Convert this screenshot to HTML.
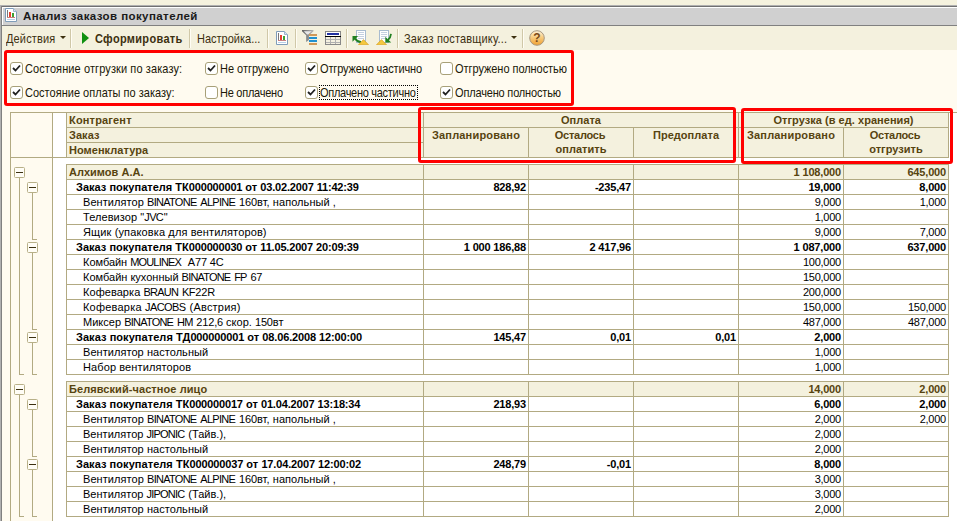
<!DOCTYPE html>
<html lang="ru"><head><meta charset="utf-8"><title>Анализ заказов покупателей</title>
<style>
*{box-sizing:border-box;margin:0;padding:0}
html,body{width:957px;height:521px;overflow:hidden;background:#fffbf0;}
body{position:relative;font-family:"Liberation Sans",sans-serif;font-size:11px;color:#000;}
.a{position:absolute}
.t{position:absolute;white-space:nowrap;line-height:15px;height:15px}
.tb{position:absolute;white-space:nowrap;font-size:11px;line-height:14px;color:#3c3010;transform:scaleY(1.13);transform-origin:0 10.8px}
.b{font-weight:bold}
.h{font-weight:bold;color:#574410}
.r{text-align:right}
.c{text-align:center}
.hl{position:absolute;height:1px;background:#b2aa82}
.vl{position:absolute;width:1px;background:#b2aa82}
.red{position:absolute;border:3px solid #ff0000;border-radius:3px}
.cb{position:absolute;width:13px;height:13px;border:1px solid #a8a078;border-radius:3px;background:#fff}
.sep{position:absolute;top:29px;width:2px;height:19px;border-left:1px solid #d0c8a8;border-right:1px solid #fffdf4}
.box{position:absolute;width:11px;height:11px;border:1px solid #b8b088;border-radius:1.5px;background:#fffdf6}
.box i{position:absolute;left:1px;top:4px;width:7px;height:1px;background:#3c3010}
.u{letter-spacing:calc(-0.72px + var(--d,0px));margin-right:0.72px}
.d{letter-spacing:calc(-0.12px + var(--d,0px))}
.t{letter-spacing:calc(0.08px + var(--d,0px))}
.t.b,.t.h{letter-spacing:calc(0.04px + var(--d,0px))}
.t.b .u,.t.h .u{letter-spacing:calc(-0.2px + var(--d,0px));margin-right:0}
.t.b .d,.t.h .d{letter-spacing:calc(-0.16px + var(--d,0px))}
.tb,#title{letter-spacing:var(--d,0px)}
.t.n{letter-spacing:-0.24px}
.t.b.n,.t.h.n{letter-spacing:-0.17px}
</style></head>
<body>
<div class="a" style="left:0;top:0;width:957px;height:5px;background:#f5f2de"></div>
<div class="a" style="left:0;top:5px;width:957px;height:1px;background:#b0b0b0"></div>
<div class="a" style="left:0;top:5px;width:1px;height:516px;background:#b0b0b0"></div>
<div class="a" style="left:1px;top:6px;width:956px;height:1px;background:#707070"></div>
<div class="a" style="left:1px;top:6px;width:1px;height:515px;background:#808080"></div>
<div class="a" style="left:2px;top:7px;width:955px;height:18px;background:#d0d0d0;border-top:1px solid #fff;border-left:1px solid #fff"></div>
<div class="a" style="left:2px;top:25px;width:955px;height:1px;background:#808080"></div>
<div class="a" style="left:2px;top:26px;width:955px;height:24px;background:#f4f1de"></div>
<svg class="a" style="left:5px;top:8px" width="12" height="14" viewBox="0 0 12 14">
<path d="M0.5 0.5H8.5L11.5 3.5V13.5H0.5Z" fill="#fff" stroke="#7f9db9"/>
<path d="M8.5 0.5V3.5H11.5" fill="#dbe6f2" stroke="#9fb5cc"/>
<rect x="2" y="2" width="1" height="8" fill="#787878"/>
<rect x="2" y="9" width="8" height="1" fill="#c88080"/>
<rect x="4" y="4" width="2" height="5" fill="#e84030"/>
<rect x="7" y="5" width="2" height="4" fill="#40a030"/>
<rect x="2" y="11" width="8" height="1" fill="#b8d0e8"/>
</svg>
<div class="a b" style="left:23px;top:9px;font-size:11.5px;line-height:14px;color:#1a1a1a;white-space:nowrap;--d:0.415px" id="title">Анализ заказов покупателей</div>
<div class="tb" style="left:6px;top:32px;--d:0.138px" id="tb1">Действия</div>
<svg class="a" style="left:60px;top:36px" width="6" height="3"><path d="M0 0H6L3 3Z" fill="#3c3010"/></svg>
<div class="sep" style="left:70px"></div>
<svg class="a" style="left:82px;top:32px" width="7" height="12"><path d="M0 0L7 6L0 12Z" fill="#109010"/></svg>
<div class="tb b" style="left:95px;top:32px;--d:0.317px" id="tb2">Сформировать</div>
<div class="sep" style="left:189px"></div>
<div class="tb" style="left:197px;top:32px;--d:-0.002px" id="tb3">Настройка...</div>
<div class="sep" style="left:267px"></div>
<svg class="a" style="left:276px;top:31px" width="12" height="14" viewBox="0 0 12 14">
<path d="M0.5 0.5H8.5L11.5 3.5V13.5H0.5Z" fill="#fff" stroke="#7f9db9"/>
<path d="M8.5 0.5V3.5H11.5" fill="#dbe6f2" stroke="#9fb5cc"/>
<rect x="2" y="2" width="1" height="8" fill="#787878"/>
<rect x="2" y="9" width="8" height="1" fill="#c88080"/>
<rect x="4" y="4" width="2" height="5" fill="#e84030"/>
<rect x="7" y="5" width="2" height="4" fill="#40a030"/>
<rect x="2" y="11" width="8" height="1" fill="#b8d0e8"/>
</svg>
<div class="sep" style="left:295px"></div>
<svg class="a" style="left:302px;top:30px" width="16" height="15" viewBox="0 0 16 15">
<defs><linearGradient id="fg" x1="0" x2="1" y1="0" y2="0"><stop offset="0" stop-color="#606060"/><stop offset="1" stop-color="#b8b8b8"/></linearGradient></defs>
<path d="M0 0H11.5V1.2L7 5.2V10L4.2 12V5.2L0 1.2Z" fill="url(#fg)"/>
<path d="M1.8 1.3H9.7L6.2 4.4H5Z" fill="#e8e8e8"/>
<rect x="7" y="4" width="8" height="2" fill="#d09858"/>
<rect x="7" y="7" width="8" height="2" fill="#2090d0"/>
<rect x="7" y="10" width="8" height="2" fill="#2090d0"/>
<rect x="7" y="13" width="8" height="2" fill="#d09858"/>
</svg>
<svg class="a" style="left:325px;top:31px" width="16" height="14" viewBox="0 0 16 14">
<rect x="0.5" y="0.5" width="15" height="13" fill="#f4f0e0" stroke="#888"/>
<rect x="1" y="1" width="14" height="4" fill="#fff"/>
<rect x="2" y="2" width="12" height="2" fill="#2030a0"/>
<rect x="0" y="5" width="16" height="1" fill="#000"/>
<path d="M1 8.5H15M1 11.5H15M5.5 6V13M10.5 6V13" stroke="#b0b0b0" fill="none"/>
</svg>
<div class="sep" style="left:346px"></div>
<svg class="a" style="left:352px;top:30px" width="17" height="15" viewBox="0 0 17 15">
<rect x="4.5" y="0.5" width="9" height="12" fill="#fff" stroke="#a8bcd0"/>
<path d="M6 2.5H12M6 4.5H12M6 6.5H12M6 8.5H12" stroke="#c4d0e0"/>
<path d="M3 8.5Q5.5 12 9 12" stroke="#208020" stroke-width="2" fill="none"/>
<path d="M0.5 6H6.2L0.5 11.7Z" fill="#208020"/>
<path d="M6.5 14.8L11.5 9.6L16.5 14.8Z" fill="#f4c840" stroke="#d8a020" stroke-width="0.7"/>
</svg>
<svg class="a" style="left:376px;top:30px" width="17" height="15" viewBox="0 0 17 15">
<rect x="3.5" y="0.5" width="9" height="12" fill="#fff" stroke="#a8bcd0"/>
<path d="M5 2.5H11M5 4.5H11M5 6.5H11M5 8.5H11" stroke="#c4d0e0"/>
<path d="M12 10Q14.5 8 15 3.8" stroke="#208020" stroke-width="1.8" fill="none"/>
<path d="M9.3 6.8V12.5H15.2Z" fill="#208020"/>
<path d="M0.5 14.8L5.5 9.6L10.5 14.8Z" fill="#f4c840" stroke="#d8a020" stroke-width="0.7"/>
</svg>
<div class="sep" style="left:397px"></div>
<div class="tb" style="left:404px;top:32px;--d:0.165px" id="tb4">Заказ поставщику...</div>
<svg class="a" style="left:511px;top:36px" width="6" height="3"><path d="M0 0H6L3 3Z" fill="#3c3010"/></svg>
<div class="sep" style="left:522px"></div>
<svg class="a" style="left:529px;top:30px" width="16" height="16" viewBox="0 0 16 16">
<defs><linearGradient id="hg" x1="0" x2="0" y1="0" y2="1"><stop offset="0" stop-color="#fff4dc"/><stop offset="0.45" stop-color="#f8cc80"/><stop offset="1" stop-color="#f0a030"/></linearGradient></defs>
<circle cx="8" cy="8" r="7.3" fill="url(#hg)" stroke="#a89880" stroke-width="1"/>
<text x="8" y="12" font-family="Liberation Sans, sans-serif" font-size="12" font-weight="bold" fill="#7a4a18" text-anchor="middle">?</text>
</svg>
<div class="red" style="left:4px;top:50px;width:570px;height:56px"></div>
<div class="cb" style="left:10px;top:62px"><svg width="11" height="11" viewBox="0 0 11 11" style="position:absolute;left:0;top:0"><path d="M2 5L4.5 7.5L9 2.5" stroke="#202020" stroke-width="1.8" fill="none"/></svg></div>
<div class="tb" style="left:25px;top:62px;color:#201808;--d:0.102px" id="c1">Состояние отгрузки по заказу:</div>
<div class="cb" style="left:10px;top:86px"><svg width="11" height="11" viewBox="0 0 11 11" style="position:absolute;left:0;top:0"><path d="M2 5L4.5 7.5L9 2.5" stroke="#202020" stroke-width="1.8" fill="none"/></svg></div>
<div class="tb" style="left:25px;top:86px;color:#201808;--d:0.017px" id="c2">Состояние оплаты по заказу:</div>
<div class="cb" style="left:205px;top:62px"><svg width="11" height="11" viewBox="0 0 11 11" style="position:absolute;left:0;top:0"><path d="M2 5L4.5 7.5L9 2.5" stroke="#202020" stroke-width="1.8" fill="none"/></svg></div>
<div class="tb" style="left:220px;top:62px;color:#201808;--d:-0.027px" id="c3">Не отгружено</div>
<div class="cb" style="left:205px;top:86px"></div>
<div class="tb" style="left:220px;top:86px;color:#201808;--d:-0.249px" id="c4">Не оплачено</div>
<div class="cb" style="left:305px;top:62px"><svg width="11" height="11" viewBox="0 0 11 11" style="position:absolute;left:0;top:0"><path d="M2 5L4.5 7.5L9 2.5" stroke="#202020" stroke-width="1.8" fill="none"/></svg></div>
<div class="tb" style="left:320px;top:62px;color:#201808;--d:-0.134px" id="c5">Отгружено частично</div>
<div class="cb" style="left:305px;top:86px"><svg width="11" height="11" viewBox="0 0 11 11" style="position:absolute;left:0;top:0"><path d="M2 5L4.5 7.5L9 2.5" stroke="#202020" stroke-width="1.8" fill="none"/></svg></div>
<div class="tb" style="left:320px;top:86px;color:#201808;--d:-0.286px" id="c6">Оплачено частично</div>
<div class="cb" style="left:440px;top:62px"></div>
<div class="tb" style="left:455px;top:62px;color:#201808;--d:-0.048px" id="c7">Отгружено полностью</div>
<div class="cb" style="left:440px;top:86px"><svg width="11" height="11" viewBox="0 0 11 11" style="position:absolute;left:0;top:0"><path d="M2 5L4.5 7.5L9 2.5" stroke="#202020" stroke-width="1.8" fill="none"/></svg></div>
<div class="tb" style="left:455px;top:86px;color:#201808;--d:-0.170px" id="c8">Оплачено полностью</div>
<div class="a" style="left:319px;top:85px;width:99px;height:15px;border:1px dotted #000"></div>
<div class="a" style="left:11px;top:113px;width:41px;height:408px;background:#fffbf0"></div>
<div class="a" style="left:53px;top:113px;width:904px;height:408px;background:#fff"></div>
<div class="hl" style="left:10px;top:112px;width:947px"></div>
<div class="vl" style="left:10px;top:112px;height:409px"></div>
<div class="vl" style="left:52px;top:112px;height:409px"></div>
<div class="a" style="left:67px;top:113px;width:882px;height:44px;background:#f4f1de"></div>
<div class="hl" style="left:10px;top:157px;width:939px"></div>
<div class="hl" style="left:66px;top:127px;width:883px"></div>
<div class="hl" style="left:66px;top:142px;width:358px"></div>
<div class="vl" style="left:66px;top:112px;height:46px"></div>
<div class="vl" style="left:423px;top:112px;height:46px"></div>
<div class="vl" style="left:738px;top:112px;height:46px"></div>
<div class="vl" style="left:948px;top:112px;height:46px"></div>
<div class="vl" style="left:528px;top:127px;height:31px"></div>
<div class="vl" style="left:633px;top:127px;height:31px"></div>
<div class="vl" style="left:843px;top:127px;height:31px"></div>
<div class="t h" id="h1" style="left:69px;top:113px;width:300px;--d:0.126px">Контрагент</div>
<div class="t h" id="h2" style="left:69px;top:128px;width:300px">Заказ</div>
<div class="t h" id="h3" style="left:69px;top:143px;width:300px">Номенклатура</div>
<div class="t h c" id="h4" style="left:424px;top:113px;width:314px">Оплата</div>
<div class="t h c" id="h5" style="left:424px;top:128px;width:104px;--d:0.150px">Запланировано</div>
<div class="t h c" id="h6" style="left:528px;top:128px;width:104px;--d:-0.280px">Осталось</div>
<div class="t h c" id="h7" style="left:529px;top:142px;width:104px">оплатить</div>
<div class="t h c" id="h8" style="left:634px;top:128px;width:104px">Предоплата</div>
<div class="t h c" id="h9" style="left:739px;top:113px;width:209px">Отгрузка (в ед. хранения)</div>
<div class="t h c" id="h10" style="left:739px;top:128px;width:104px;--d:0.150px">Запланировано</div>
<div class="t h c" id="h11" style="left:843px;top:128px;width:104px;--d:-0.280px">Осталось</div>
<div class="t h c" id="h12" style="left:844px;top:142px;width:104px">отгрузить</div>
<div class="a" style="left:67px;top:165px;width:881px;height:14px;background:#f4f1de"></div>
<div class="hl" style="left:66px;top:164px;width:883px"></div>
<div class="hl" style="left:66px;top:179px;width:883px"></div>
<div class="hl" style="left:66px;top:194px;width:883px"></div>
<div class="hl" style="left:66px;top:209px;width:883px"></div>
<div class="hl" style="left:66px;top:224px;width:883px"></div>
<div class="hl" style="left:66px;top:239px;width:883px"></div>
<div class="hl" style="left:66px;top:254px;width:883px"></div>
<div class="hl" style="left:66px;top:269px;width:883px"></div>
<div class="hl" style="left:66px;top:284px;width:883px"></div>
<div class="hl" style="left:66px;top:299px;width:883px"></div>
<div class="hl" style="left:66px;top:314px;width:883px"></div>
<div class="hl" style="left:66px;top:329px;width:883px"></div>
<div class="hl" style="left:66px;top:344px;width:883px"></div>
<div class="hl" style="left:66px;top:359px;width:883px"></div>
<div class="hl" style="left:66px;top:374px;width:883px"></div>
<div class="vl" style="left:66px;top:164px;height:211px"></div>
<div class="vl" style="left:423px;top:164px;height:211px"></div>
<div class="vl" style="left:528px;top:164px;height:211px"></div>
<div class="vl" style="left:633px;top:164px;height:211px"></div>
<div class="vl" style="left:738px;top:164px;height:211px"></div>
<div class="vl" style="left:843px;top:164px;height:211px"></div>
<div class="vl" style="left:948px;top:164px;height:211px"></div>
<div class="vl" style="left:19px;top:178px;height:196px"></div>
<div class="hl" style="left:19px;top:374px;width:5px"></div>
<div class="box" style="left:14px;top:167px"><i></i></div>
<div class="vl" style="left:32px;top:193px;height:46px"></div>
<div class="hl" style="left:32px;top:239px;width:5px"></div>
<div class="box" style="left:27px;top:182px"><i></i></div>
<div class="vl" style="left:32px;top:253px;height:76px"></div>
<div class="hl" style="left:32px;top:329px;width:5px"></div>
<div class="box" style="left:27px;top:242px"><i></i></div>
<div class="vl" style="left:32px;top:343px;height:31px"></div>
<div class="hl" style="left:32px;top:374px;width:5px"></div>
<div class="box" style="left:27px;top:332px"><i></i></div>
<div class="t h" id="n164_0" style="left:69px;top:165px;width:340px;--d:-0.027px">Алхимов А.А.</div>
<div class="t h r n" id="t14" style="left:739px;top:165px;width:102px">1&nbsp;108,000</div>
<div class="t h r n" id="t15" style="left:844px;top:165px;width:102px">645,000</div>
<div class="t b" id="n164_1" style="left:76px;top:180px;width:340px;--d:-0.019px">Заказ покупателя ТК<span class="d">000000001</span> от <span class="d">03.02.2007</span> <span class="d">11:42:39</span></div>
<div class="t b r n" id="t17" style="left:424px;top:180px;width:102px">828,92</div>
<div class="t b r n" id="t18" style="left:529px;top:180px;width:102px">-235,47</div>
<div class="t b r n" id="t19" style="left:739px;top:180px;width:102px">19,000</div>
<div class="t b r n" id="t20" style="left:844px;top:180px;width:102px">8,000</div>
<div class="t " id="n164_2" style="left:83px;top:195px;width:340px;--d:-0.008px">Вентилятор <span class="u">BINATONE</span> <span class="u">ALPINE</span> <span class="d">160</span>вт, напольный ,</div>
<div class="t  r n" id="t22" style="left:739px;top:195px;width:102px">9,000</div>
<div class="t  r n" id="t23" style="left:844px;top:195px;width:102px">1,000</div>
<div class="t " id="n164_3" style="left:83px;top:210px;width:340px;--d:-0.002px">Телевизор "<span class="u">JVC</span>"</div>
<div class="t  r n" id="t25" style="left:739px;top:210px;width:102px">1,000</div>
<div class="t " id="n164_4" style="left:83px;top:225px;width:340px;--d:0.051px">Ящик (упаковка для вентиляторов)</div>
<div class="t  r n" id="t27" style="left:739px;top:225px;width:102px">9,000</div>
<div class="t  r n" id="t28" style="left:844px;top:225px;width:102px">7,000</div>
<div class="t b" id="n164_5" style="left:76px;top:240px;width:340px;--d:-0.019px">Заказ покупателя ТК<span class="d">000000030</span> от <span class="d">11.05.2007</span> <span class="d">20:09:39</span></div>
<div class="t b r n" id="t30" style="left:424px;top:240px;width:102px">1&nbsp;000&nbsp;186,88</div>
<div class="t b r n" id="t31" style="left:529px;top:240px;width:102px">2&nbsp;417,96</div>
<div class="t b r n" id="t32" style="left:739px;top:240px;width:102px">1&nbsp;087,000</div>
<div class="t b r n" id="t33" style="left:844px;top:240px;width:102px">637,000</div>
<div class="t " id="n164_6" style="left:83px;top:255px;width:340px;--d:-0.108px">Комбайн <span class="u">MOULINEX</span>&nbsp; <span class="u">A</span><span class="d">77</span> <span class="d">4</span><span class="u">C</span></div>
<div class="t  r n" id="t35" style="left:739px;top:255px;width:102px">100,000</div>
<div class="t " id="n164_7" style="left:83px;top:270px;width:340px;--d:-0.080px">Комбайн кухонный <span class="u">BINATONE</span> <span class="u">FP</span> <span class="d">67</span></div>
<div class="t  r n" id="t37" style="left:739px;top:270px;width:102px">150,000</div>
<div class="t " id="n164_8" style="left:83px;top:285px;width:340px;--d:-0.026px">Кофеварка <span class="u">BRAUN</span> <span class="u">KF</span><span class="d">22</span><span class="u">R</span></div>
<div class="t  r n" id="t39" style="left:739px;top:285px;width:102px">200,000</div>
<div class="t " id="n164_9" style="left:83px;top:300px;width:340px;--d:0.135px">Кофеварка <span class="u">JACOBS</span> (Австрия)</div>
<div class="t  r n" id="t41" style="left:739px;top:300px;width:102px">150,000</div>
<div class="t  r n" id="t42" style="left:844px;top:300px;width:102px">150,000</div>
<div class="t " id="n164_10" style="left:83px;top:315px;width:340px;--d:-0.060px">Миксер <span class="u">BINATONE</span> <span class="u">HM</span> <span class="d">212,6</span> скор. <span class="d">150</span>вт</div>
<div class="t  r n" id="t44" style="left:739px;top:315px;width:102px">487,000</div>
<div class="t  r n" id="t45" style="left:844px;top:315px;width:102px">487,000</div>
<div class="t b" id="n164_11" style="left:76px;top:330px;width:340px;--d:0.017px">Заказ покупателя ТД<span class="d">000000001</span> от <span class="d">08.06.2008</span> <span class="d">12:00:00</span></div>
<div class="t b r n" id="t47" style="left:424px;top:330px;width:102px">145,47</div>
<div class="t b r n" id="t48" style="left:529px;top:330px;width:102px">0,01</div>
<div class="t b r n" id="t49" style="left:634px;top:330px;width:102px">0,01</div>
<div class="t b r n" id="t50" style="left:739px;top:330px;width:102px">2,000</div>
<div class="t " id="n164_12" style="left:83px;top:345px;width:340px;--d:-0.026px">Вентилятор настольный</div>
<div class="t  r n" id="t52" style="left:739px;top:345px;width:102px">1,000</div>
<div class="t " id="n164_13" style="left:83px;top:360px;width:340px;--d:0.024px">Набор вентиляторов</div>
<div class="t  r n" id="t54" style="left:739px;top:360px;width:102px">1,000</div>
<div class="a" style="left:67px;top:382px;width:881px;height:14px;background:#f4f1de"></div>
<div class="hl" style="left:66px;top:381px;width:883px"></div>
<div class="hl" style="left:66px;top:396px;width:883px"></div>
<div class="hl" style="left:66px;top:411px;width:883px"></div>
<div class="hl" style="left:66px;top:426px;width:883px"></div>
<div class="hl" style="left:66px;top:441px;width:883px"></div>
<div class="hl" style="left:66px;top:456px;width:883px"></div>
<div class="hl" style="left:66px;top:471px;width:883px"></div>
<div class="hl" style="left:66px;top:486px;width:883px"></div>
<div class="hl" style="left:66px;top:501px;width:883px"></div>
<div class="hl" style="left:66px;top:516px;width:883px"></div>
<div class="vl" style="left:66px;top:381px;height:136px"></div>
<div class="vl" style="left:423px;top:381px;height:136px"></div>
<div class="vl" style="left:528px;top:381px;height:136px"></div>
<div class="vl" style="left:633px;top:381px;height:136px"></div>
<div class="vl" style="left:738px;top:381px;height:136px"></div>
<div class="vl" style="left:843px;top:381px;height:136px"></div>
<div class="vl" style="left:948px;top:381px;height:136px"></div>
<div class="vl" style="left:19px;top:395px;height:121px"></div>
<div class="hl" style="left:19px;top:516px;width:5px"></div>
<div class="box" style="left:14px;top:384px"><i></i></div>
<div class="vl" style="left:32px;top:410px;height:46px"></div>
<div class="hl" style="left:32px;top:456px;width:5px"></div>
<div class="box" style="left:27px;top:399px"><i></i></div>
<div class="vl" style="left:32px;top:470px;height:46px"></div>
<div class="hl" style="left:32px;top:516px;width:5px"></div>
<div class="box" style="left:27px;top:459px"><i></i></div>
<div class="t h" id="n381_0" style="left:69px;top:382px;width:340px;--d:0.037px">Белявский-частное лицо</div>
<div class="t h r n" id="t56" style="left:739px;top:382px;width:102px">14,000</div>
<div class="t h r n" id="t57" style="left:844px;top:382px;width:102px">2,000</div>
<div class="t b" id="n381_1" style="left:76px;top:397px;width:340px;--d:0.000px">Заказ покупателя ТК<span class="d">000000017</span> от <span class="d">01.04.2007</span> <span class="d">13:18:34</span></div>
<div class="t b r n" id="t59" style="left:424px;top:397px;width:102px">218,93</div>
<div class="t b r n" id="t60" style="left:739px;top:397px;width:102px">6,000</div>
<div class="t b r n" id="t61" style="left:844px;top:397px;width:102px">2,000</div>
<div class="t " id="n381_2" style="left:83px;top:412px;width:340px;--d:-0.009px">Вентилятор <span class="u">BINATONE</span> <span class="u">ALPINE</span> <span class="d">160</span>вт, напольный ,</div>
<div class="t  r n" id="t63" style="left:739px;top:412px;width:102px">2,000</div>
<div class="t  r n" id="t64" style="left:844px;top:412px;width:102px">2,000</div>
<div class="t " id="n381_3" style="left:83px;top:427px;width:340px;--d:-0.060px">Вентилятор <span class="u">JIPONIC</span> (Тайв.),</div>
<div class="t  r n" id="t66" style="left:739px;top:427px;width:102px">2,000</div>
<div class="t " id="n381_4" style="left:83px;top:442px;width:340px;--d:-0.026px">Вентилятор настольный</div>
<div class="t  r n" id="t68" style="left:739px;top:442px;width:102px">2,000</div>
<div class="t b" id="n381_5" style="left:76px;top:457px;width:340px;--d:0.014px">Заказ покупателя ТК<span class="d">000000037</span> от <span class="d">17.04.2007</span> <span class="d">12:00:02</span></div>
<div class="t b r n" id="t70" style="left:424px;top:457px;width:102px">248,79</div>
<div class="t b r n" id="t71" style="left:529px;top:457px;width:102px">-0,01</div>
<div class="t b r n" id="t72" style="left:739px;top:457px;width:102px">8,000</div>
<div class="t " id="n381_6" style="left:83px;top:472px;width:340px;--d:-0.009px">Вентилятор <span class="u">BINATONE</span> <span class="u">ALPINE</span> <span class="d">160</span>вт, напольный ,</div>
<div class="t  r n" id="t74" style="left:739px;top:472px;width:102px">3,000</div>
<div class="t " id="n381_7" style="left:83px;top:487px;width:340px;--d:-0.060px">Вентилятор <span class="u">JIPONIC</span> (Тайв.),</div>
<div class="t  r n" id="t76" style="left:739px;top:487px;width:102px">3,000</div>
<div class="t " id="n381_8" style="left:83px;top:502px;width:340px;--d:-0.026px">Вентилятор настольный</div>
<div class="t  r n" id="t78" style="left:739px;top:502px;width:102px">2,000</div>
<div class="red" style="left:418px;top:107px;width:318px;height:56px"></div>
<div class="red" style="left:741px;top:108px;width:212px;height:56px"></div>
</body></html>
